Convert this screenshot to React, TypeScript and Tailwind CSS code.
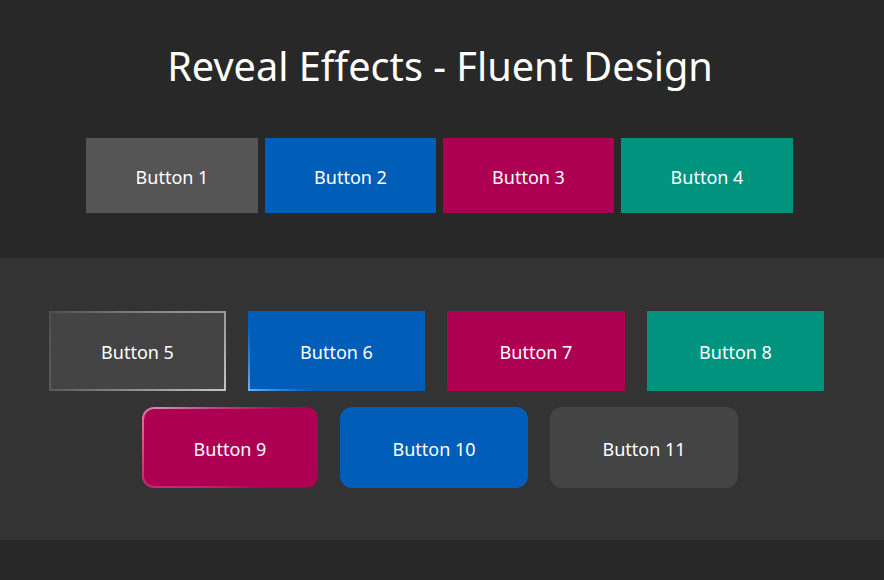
const font = { fontFamily: '"Noto Sans", "Open Sans", sans-serif' };

const Flat = ({ label, className }: { label: string; className: string }) => (
  <div
    className={`flex items-center justify-center pt-[3px] text-white text-[18px] ${className}`}>
    {label}
  </div>
);

// reveal-style button: gradient shell with a 2px frame, solid fill inside
const Reveal = ({
  label,
  shell,
  fill
}: {
  label: string;
  shell: string;
  fill: string;
}) => (
  <div className={`p-[2px] ${shell}`}>
    <div
      className={`flex h-full w-full items-center justify-center pt-[3px] text-white text-[18px] ${fill}`}>
      {label}
    </div>
  </div>
);

export default function App() {
  return (
    <div className="min-h-[580px] w-full bg-[#282828]" style={font}>
      <div className="flex h-[258px] flex-col items-center">
        <h1 className="mt-[41px] h-[50px] pr-[4px] text-[39.7px] leading-[50px] font-normal text-white">
          Reveal Effects - Fluent Design
        </h1>
        <div className="mt-[47px] flex gap-[7px] pr-[5px]">
          <Flat label="Button 1" className="h-[75px] w-[172px] bg-[#555555]" />
          <Flat label="Button 2" className="h-[75px] w-[171px] bg-[#005eb8]" />
          <Flat label="Button 3" className="h-[75px] w-[171px] bg-[#ad0052]" />
          <Flat label="Button 4" className="h-[75px] w-[172px] bg-[#00937e]" />
        </div>
      </div>

      <div className="flex h-[282px] flex-col items-center gap-[16px] bg-[#333333] pt-[53px]">
        <div className="flex gap-[22px] pr-[11px]">
          <Reveal
            label="Button 5"
            shell="h-[80px] w-[177px] bg-[radial-gradient(circle_at_100%_100%,#c4c4c4_0px,#8a8a8a_100px,#505050_190px)]"
            fill="bg-[#444444]"
          />
          <Reveal
            label="Button 6"
            shell="h-[80px] w-[177px] bg-[radial-gradient(circle_at_0%_100%,#74aef0_0px,#3a84d2_30px,#005eb8_65px)]"
            fill="bg-[#005eb8]"
          />
          <Flat label="Button 7" className="h-[80px] w-[178px] bg-[#ad0052]" />
          <Flat label="Button 8" className="h-[80px] w-[177px] bg-[#00937e]" />
        </div>
        <div className="flex gap-[22px] pr-[4px]">
          <Reveal
            label="Button 9"
            shell="h-[81px] w-[176px] rounded-[12px] bg-[radial-gradient(circle_at_10%_0%,#de86aa_0px,#c84a80_50px,#ad0052_130px)]"
            fill="rounded-[10px] bg-[#ad0052]"
          />
          <Flat
            label="Button 10"
            className="h-[81px] w-[188px] rounded-[12px] bg-[#005eb8]"
          />
          <Flat
            label="Button 11"
            className="h-[81px] w-[188px] rounded-[12px] bg-[#444444]"
          />
        </div>
      </div>
    </div>
  );
}
